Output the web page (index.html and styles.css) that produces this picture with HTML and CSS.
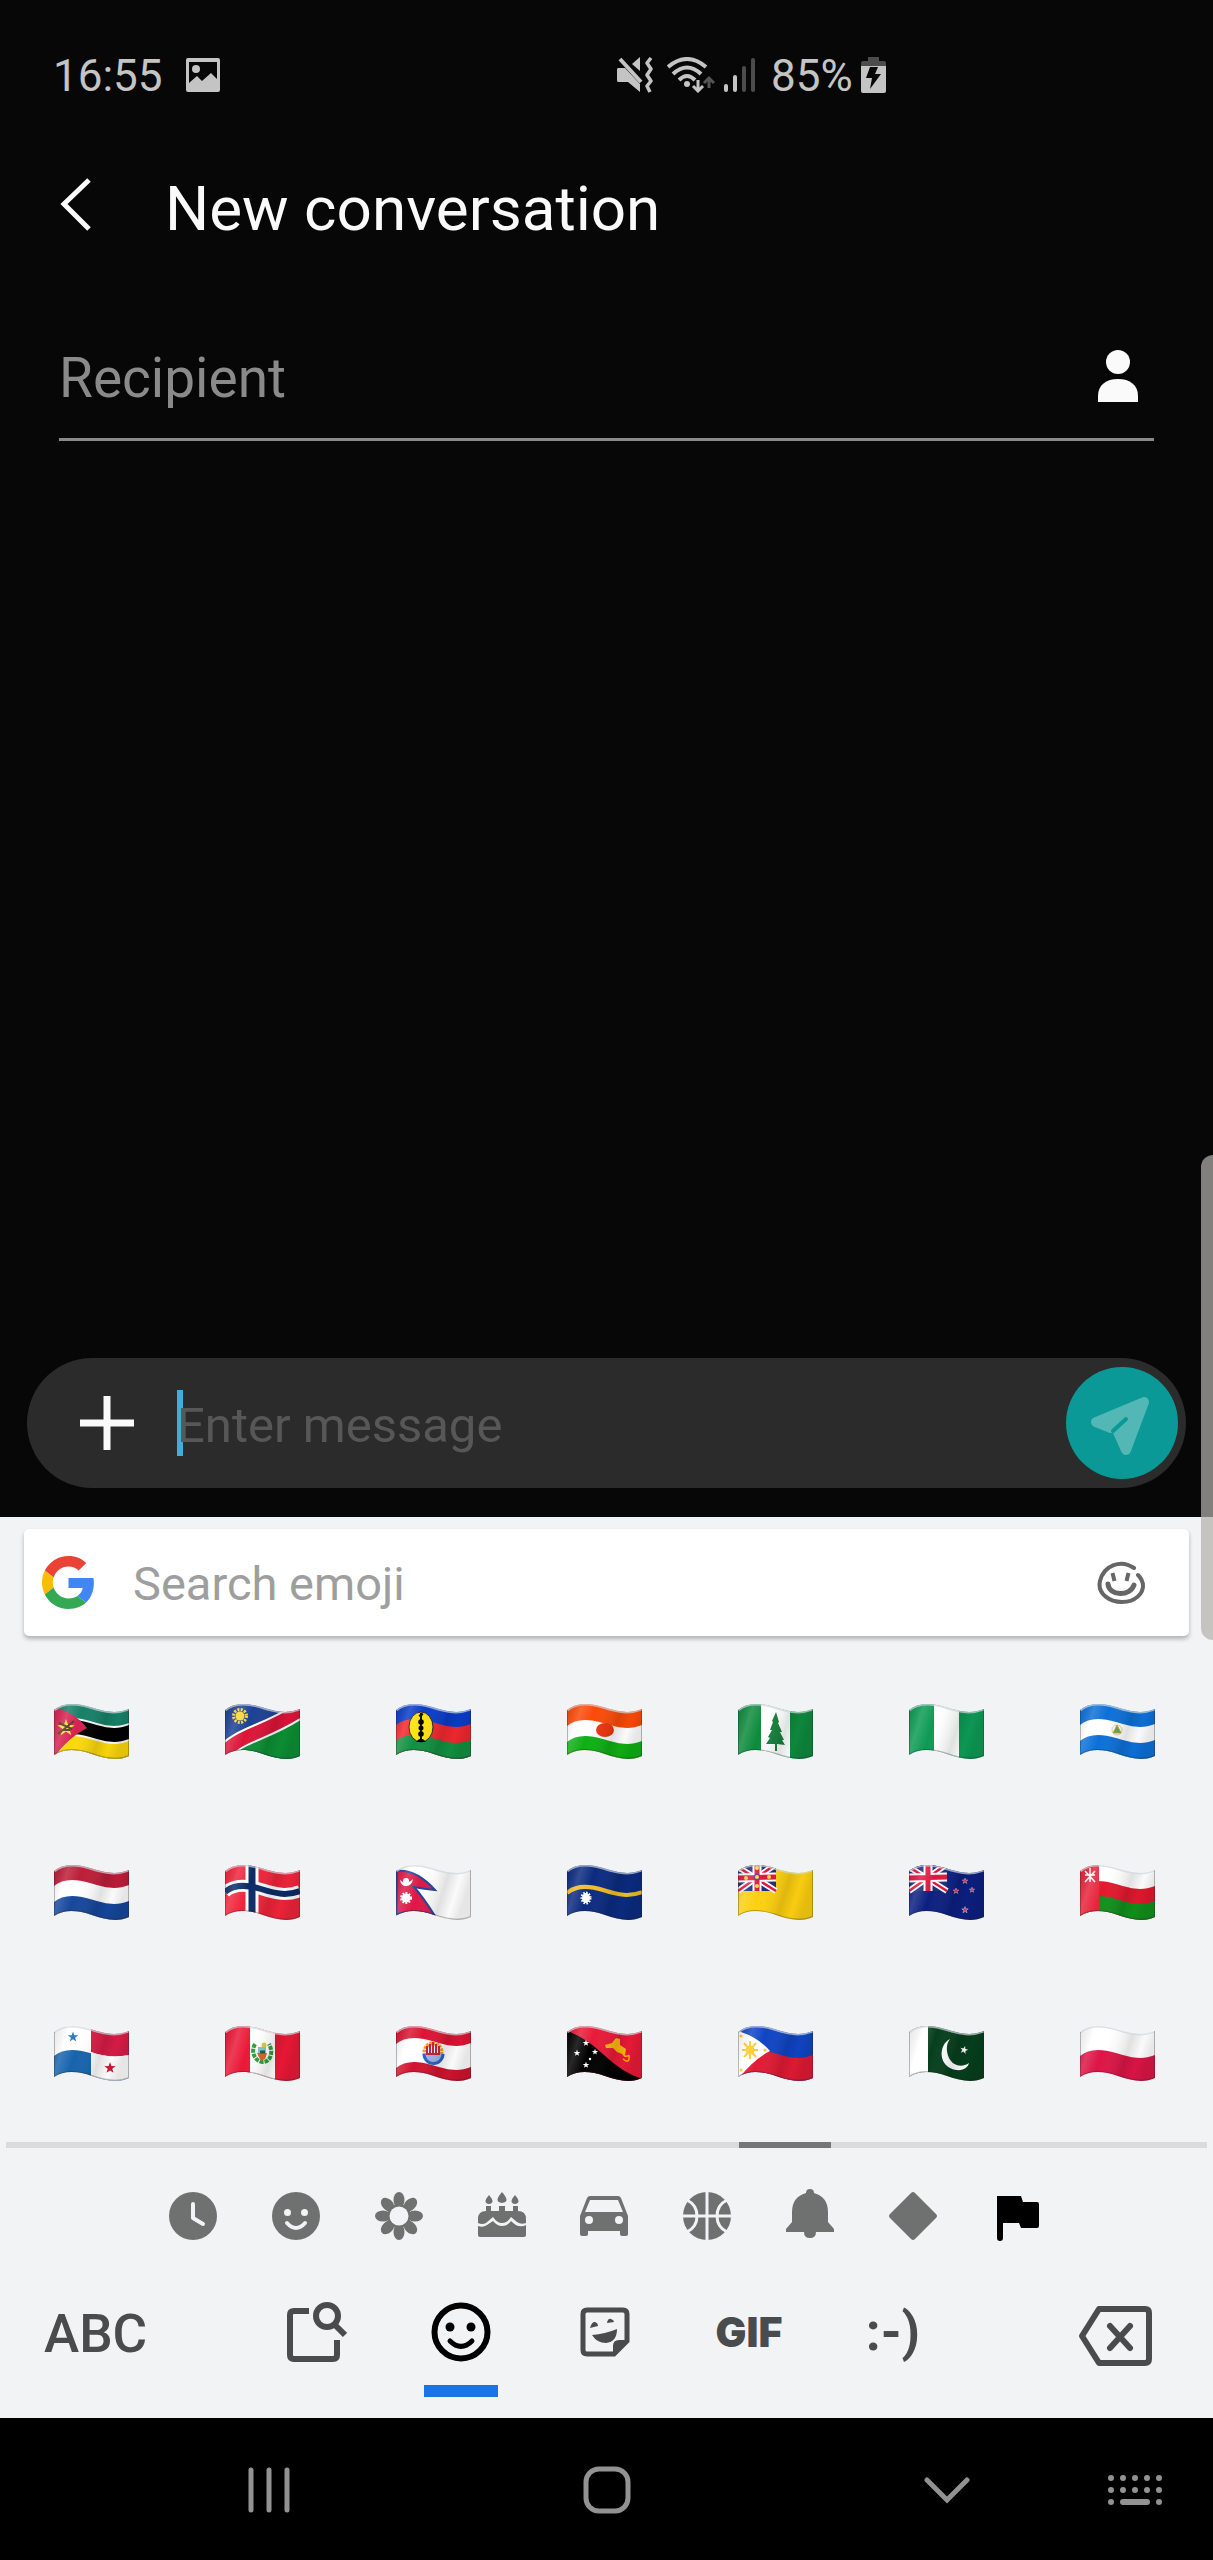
FILE: index.html
```html
<!DOCTYPE html>
<html lang="en">
<head>
<meta charset="utf-8">
<meta name="viewport" content="width=device-width, initial-scale=1">
<title>New conversation</title>
<link rel="stylesheet" href="styles.css">
</head>
<body>
<svg class="defs" width="0" height="0" aria-hidden="true">
  <defs>
    <clipPath id="cloth"><path d="M0 7C8 0 20 -1 36 4S62 11 75 6V53C64 58 52 56 38 51S10 45 0 52Z"/></clipPath>
    <path id="band" d="M0 7C8 0 20 -1 36 4S62 11 75 6V60H0Z"/>
    <path id="curve" d="M0 7C8 0 20 -1 36 4S62 11 75 6" fill="none"/>
    <path id="star" d="M0-10 2.4-3.2 9.5-3.1 3.8 1.2 5.9 8.1 0 4-5.9 8.1-3.8 1.2-9.5-3.1-2.4-3.2Z"/>
    <linearGradient id="folds" x1="0" y1="0" x2="1" y2=".25">
      <stop offset="0" stop-color="#000" stop-opacity=".08"/>
      <stop offset=".2" stop-color="#fff" stop-opacity=".16"/>
      <stop offset=".38" stop-color="#fff" stop-opacity="0"/>
      <stop offset=".7" stop-color="#000" stop-opacity=".12"/>
      <stop offset=".86" stop-color="#000" stop-opacity=".02"/>
      <stop offset="1" stop-color="#000" stop-opacity=".1"/>
    </linearGradient>
    <g id="shade">
      <rect width="75" height="60" fill="url(#folds)"/>
      <path d="M0 7C8 0 20 -1 36 4S62 11 75 6" fill="none" stroke="#cfd6dc" stroke-opacity=".7" stroke-width="3"/>
      <path d="M75 6V53C64 58 52 56 38 51S10 45 0 52V7" fill="none" stroke="#222" stroke-opacity=".3" stroke-width="2"/>
    </g>
    <g id="union">
      <path fill="#1c2a7c" d="M0 0H38V27H0Z"/>
      <path stroke="#fff" stroke-width="6" d="M0 3 38 27M38 0 0 27"/>
      <path stroke="#e0143c" stroke-width="2.5" d="M0 3 38 27M38 0 0 27"/>
      <path stroke="#fff" stroke-width="9" d="M19 0V27M0 14 38 13"/>
      <path stroke="#e0143c" stroke-width="5" d="M19 0V27M0 14 38 13"/>
    </g>
  </defs>
</svg>

<div class="conversation">
  <div class="status">
    <div class="status-left">
      <span>16:55</span>
      <svg width="36" height="34" viewBox="0 0 36 34"><path fill="#c4c4c4" fill-rule="evenodd" d="M3 0H33Q35 0 35 2V32Q35 34 33 34H3Q1 34 1 32V2Q1 0 3 0ZM4 4V25L12 18 17 23 26 15 32 21V4Z"/><circle cx="11" cy="11" r="4" fill="#c4c4c4"/></svg>
    </div>
    <div class="status-right">
      <svg width="36" height="36" viewBox="0 0 36 36" fill="#c4c4c4"><path d="M1 11H8L23 27V35L11 25H1Q0 25 0 23V13Q0 11 1 11ZM23 0V14L15 7Z"/><path d="M3 2 24 25" stroke="#c4c4c4" stroke-width="4"/><path d="M34 1 30 6 34 12 30 18 34 24 30 29 33 35" fill="none" stroke="#c4c4c4" stroke-width="3.5" stroke-linejoin="round"/></svg>
      <svg class="wifi" width="48" height="36" viewBox="0 0 48 36" fill="none" stroke="#c4c4c4" stroke-width="4"><path d="M1 10Q20-6 39 10M6 17Q20 4 34 17M12 23Q20 15 28 23"/><circle cx="20" cy="27" r="3" fill="#c4c4c4" stroke="none"/><path d="M31 23V33M26 29 31 34 36 29" stroke-width="3"/><path d="M42 31V22M37 26 42 21 47 26" stroke="#555" stroke-width="3"/></svg>
      <svg class="signal" width="32" height="34" viewBox="0 0 32 34" stroke-width="4" stroke-linecap="round"><path stroke="#c4c4c4" d="M2 28V32M11 19V32"/><path stroke="#4c4c4c" d="M20 10V32M29 2V32"/></svg>
      <span>85%</span>
      <svg class="battery" width="25" height="36" viewBox="0 0 25 36"><path fill="#4c4c4c" d="M7 0H18V4H23Q25 4 25 6V10H0V6Q0 4 2 4H7Z"/><path fill="#c4c4c4" d="M0 9H25V34Q25 36 23 36H2Q0 36 0 34Z"/><path fill="#080808" d="M9 10H17L14 17H20L9 32 11 21H5Z"/></svg>
    </div>
  </div>

  <header class="appbar">
    <button class="icon-button" aria-label="Back"><svg width="36" height="60" viewBox="0 0 36 60"><path d="M32 2 7 26 32 51" fill="none" stroke="#fafafa" stroke-width="5"/></svg></button>
    <h1>New conversation</h1>
  </header>

  <div class="recipient">
    <input type="text" aria-label="Recipient" placeholder="Recipient">
    <button class="icon-button" aria-label="Choose contact"><svg width="40" height="56" viewBox="0 0 40 56" fill="#fafafa"><circle cx="20" cy="12" r="12"/><path d="M0 52V46C0 35 8 29 20 29S40 35 40 46V52Z"/></svg></button>
  </div>

  <main class="thread"></main>

  <div class="compose">
    <button class="icon-button" aria-label="Add attachment"><svg width="54" height="54" viewBox="0 0 54 54"><path d="M27 0V54M0 27H54" stroke="#fafafa" stroke-width="7"/></svg></button>
    <div class="field"><span class="caret"></span><input type="text" aria-label="Message" placeholder="Enter message"></div>
    <button class="send" aria-label="Send"><svg width="112" height="112" viewBox="0 0 112 112"><path d="M78 35 30 55 45 61 60 47 52 65 60 83Z" fill="#53b7b6" stroke="#53b7b6" stroke-width="10" stroke-linejoin="round"/><path d="M47 64 60 52" stroke="#0a9997" stroke-width="4" stroke-linecap="round"/></svg></button>
  </div>
</div>

<section class="keyboard" aria-label="Emoji keyboard">
  <div class="search">
    <svg width="53" height="53" viewBox="0 0 48 48"><path fill="#ea4335" d="M24 9.5c3.54 0 6.71 1.22 9.21 3.6l6.85-6.85C35.9 2.38 30.47 0 24 0 14.62 0 6.51 5.38 2.56 13.22l7.98 6.19C12.43 13.72 17.74 9.5 24 9.5z"/><path fill="#4285f4" d="M46.98 24.55c0-1.57-.15-3.09-.38-4.55H24v9.02h12.94c-.58 2.96-2.26 5.48-4.78 7.18l7.73 6c4.51-4.18 7.09-10.36 7.09-17.65z"/><path fill="#fbbc05" d="M10.53 28.59c-.48-1.45-.76-2.99-.76-4.59s.27-3.14.76-4.59l-7.98-6.19C.92 16.46 0 20.12 0 24c0 3.88.92 7.54 2.56 10.78l7.97-6.19z"/><path fill="#34a853" d="M24 48c6.48 0 11.93-2.13 15.89-5.81l-7.73-6c-2.15 1.45-4.92 2.3-8.16 2.3-6.26 0-11.57-4.22-13.47-9.91l-7.98 6.19C6.51 42.62 14.62 48 24 48z"/></svg>
    <input type="search" aria-label="Search emoji" placeholder="Search emoji">
    <button class="icon-button" aria-label="Draw emoji"><svg width="48" height="44" viewBox="0 0 48 44" fill="none" stroke="#666" stroke-width="4" stroke-linecap="round"><path d="M37 7C24-2 7 4 3 20 0 33 13 41 25 41 39 41 46 32 46 25Q46 19 41 14"/><path d="M11 23C12 35 33 36 37 24" stroke-width="5"/><path d="M16 14 17 18M31 14 30 18" stroke-width="4" stroke-linecap="square"/></svg></button>
  </div>

  <div class="flags">
    <button aria-label="Mozambique"><svg viewBox="0 0 75 56"><g clip-path="url(#cloth)"><use href="#band" fill="#178067" y="-2"/><use href="#band" fill="#fff" y="14"/><use href="#band" fill="#000" y="16"/><use href="#band" fill="#fff" y="30"/><use href="#band" fill="#fbd80b" y="32"/><path fill="#d62150" d="M0 4Q22 10 33 25 15 34 0 54Z"/><use href="#star" fill="#fbdc3c" transform="translate(12 25) scale(.9)"/><path d="M4 31 20 18M5 20 18 26M9 27H16" stroke="#4a3918" stroke-width="2"/><use href="#shade"/></g></svg></button>
    <button aria-label="Namibia"><svg viewBox="0 0 75 56"><g clip-path="url(#cloth)"><path fill="#1c4094" d="M0 0H75V56H0Z"/><path fill="#0d8f34" d="M0 56C20 34 40 32 75 8V60H0Z"/><path d="M-4 53C14 30 42 31 80 4" fill="none" stroke="#fff" stroke-width="17"/><path d="M-4 53C14 30 42 31 80 4" fill="none" stroke="#dc1438" stroke-width="13"/><circle cx="15" cy="13" r="6.5" fill="none" stroke="#ffd62e" stroke-width="3" stroke-dasharray="2 1.4"/><circle cx="15" cy="13" r="4.5" fill="#ffd62e"/><use href="#shade"/></g></svg></button>
    <button aria-label="New Caledonia"><svg viewBox="0 0 75 56"><g clip-path="url(#cloth)"><use href="#band" fill="#0a3cc8" y="-2"/><use href="#band" fill="#f02830" y="15"/><use href="#band" fill="#129040" y="31"/><ellipse cx="25" cy="24" rx="12" ry="15" fill="#fce210" stroke="#222" stroke-width="1"/><path d="M25 10V36" stroke="#111" stroke-width="2"/><path d="M20 39Q25 32 30 39Z"/><circle cx="25" cy="19" r="2.8"/><circle cx="25" cy="25" r="2.5"/><circle cx="25" cy="31" r="2.8"/><path d="M23 13 27 11" stroke="#111" stroke-width="2"/><use href="#shade"/></g></svg></button>
    <button aria-label="Niger"><svg viewBox="0 0 75 56"><g clip-path="url(#cloth)"><use href="#band" fill="#fa4a08" y="-2"/><use href="#band" fill="#fff" y="16"/><use href="#band" fill="#0eaf14" y="32"/><ellipse cx="38" cy="27" rx="9" ry="7" fill="#ec330d"/><use href="#shade"/></g></svg></button>
    <button aria-label="Norfolk Island"><svg viewBox="0 0 75 56"><g clip-path="url(#cloth)"><path fill="#0d8a3c" d="M0 0H75V56H0Z"/><path fill="#fff" d="M23 0H52V56H23Z"/><path fill="#14803c" d="M38 9 41 19 40 20 44 29 42 29 46 37 44 37 47 42 39 41V48H37V41L28 41 32 35 30 34 34 27 32 27 35 19 34 18Z"/><use href="#shade"/></g></svg></button>
    <button aria-label="Nigeria"><svg viewBox="0 0 75 56"><g clip-path="url(#cloth)"><path fill="#0c9a54" d="M0 0H75V56H0Z"/><path fill="#fff" d="M25 0H50V56H25Z"/><use href="#shade"/></g></svg></button>
    <button aria-label="Nicaragua"><svg viewBox="0 0 75 56"><g clip-path="url(#cloth)"><use href="#band" fill="#0c70d8" y="-2"/><use href="#band" fill="#fff" y="15"/><use href="#band" fill="#0c70d8" y="31"/><circle cx="37" cy="27" r="5" fill="none" stroke="#ddd09c"/><path d="M37 22 41 30H33Z" fill="#5da35a" stroke="#c9a32a"/><use href="#shade"/></g></svg></button>

    <button aria-label="Netherlands"><svg viewBox="0 0 75 56"><g clip-path="url(#cloth)"><use href="#band" fill="#bd1d38" y="-2"/><use href="#band" fill="#fff" y="15"/><use href="#band" fill="#15479c" y="31"/><use href="#shade"/></g></svg></button>
    <button aria-label="Norway"><svg viewBox="0 0 75 56"><g clip-path="url(#cloth)"><path fill="#f0243a" d="M0 0H75V56H0Z"/><use href="#curve" y="21" stroke="#fff" stroke-width="12"/><path stroke="#fff" stroke-width="13" d="M27 0V56"/><use href="#curve" y="21" stroke="#0b2a66" stroke-width="6"/><path stroke="#0b2a66" stroke-width="7" d="M27 0V56"/><use href="#shade"/></g></svg></button>
    <button aria-label="Nepal"><svg viewBox="0 0 75 56"><g clip-path="url(#cloth)"><path fill="#fff" d="M0 0H75V56H0Z"/><path fill="#dc1846" stroke="#24419a" stroke-width="2" d="M1 7Q20 5 39 26 28 25 18 23 27 33 39 52 22 44 1 50Z"/><path d="M4 16Q10 22 17 15 16 22 10 22 5 22 4 16Z" fill="#fff"/><circle cx="10" cy="17" r="3" fill="#fff"/><circle cx="10" cy="34" r="4.5" fill="#fff" stroke="#fff" stroke-width="3" stroke-dasharray="1.6 1.3"/><use href="#shade"/></g></svg></button>
    <button aria-label="Nauru"><svg viewBox="0 0 75 56"><g clip-path="url(#cloth)"><path fill="#0b2b80" d="M0 0H75V56H0Z"/><use href="#curve" y="22" stroke="#f3bc28" stroke-width="4"/><ellipse cx="19" cy="34" rx="4" ry="5" fill="#fff" stroke="#fff" stroke-width="3" stroke-dasharray="1.4 1.2"/><use href="#shade"/></g></svg></button>
    <button aria-label="Niue"><svg viewBox="0 0 75 56"><g clip-path="url(#cloth)"><path fill="#fdd010" d="M0 0H75V56H0Z"/><use href="#union"/><circle cx="19" cy="13" r="3" fill="#36409a"/><g fill="#fdd84a"><circle cx="19" cy="4" r="2"/><circle cx="19" cy="13" r="2"/><circle cx="19" cy="22" r="2"/><circle cx="8" cy="14" r="2"/><circle cx="31" cy="13" r="2"/></g><use href="#shade"/></g></svg></button>
    <button aria-label="New Zealand"><svg viewBox="0 0 75 56"><g clip-path="url(#cloth)"><path fill="#0b1f80" d="M0 0H75V56H0Z"/><use href="#union"/><g fill="#e0335a" stroke="#d9a8c4" stroke-width="2"><use href="#star" transform="translate(56 17) scale(.3)"/><use href="#star" transform="translate(47 27) scale(.3)"/><use href="#star" transform="translate(63 26) scale(.28)"/><use href="#star" transform="translate(56 46) scale(.34)"/></g><use href="#shade"/></g></svg></button>
    <button aria-label="Oman"><svg viewBox="0 0 75 56"><g clip-path="url(#cloth)"><use href="#band" fill="#fff" y="-2"/><use href="#band" fill="#e3182e" y="16"/><use href="#band" fill="#11901c" y="31"/><path fill="#e6233a" d="M0 0H19V56H0Z"/><path d="M5 7 15 18M15 7 5 18M10 4V18M5 11H15" stroke="#fff" stroke-width="1.5"/><use href="#shade"/></g></svg></button>

    <button aria-label="Panama"><svg viewBox="0 0 75 56"><g clip-path="url(#cloth)"><use href="#band" fill="#fff" y="-2"/><use href="#band" fill="#1663ad" y="24"/><path fill="#d81c46" d="M37 0H75V30Q56 34 37 27Z"/><path fill="#fff" d="M37 27Q56 34 75 30V60H37Z"/><use href="#star" fill="#1a6fba" transform="translate(19 12) scale(.55)"/><use href="#star" fill="#cc1c34" transform="translate(56 43) scale(.6)"/><use href="#shade"/></g></svg></button>
    <button aria-label="Peru"><svg viewBox="0 0 75 56"><g clip-path="url(#cloth)"><path fill="#ea1836" d="M0 0H75V56H0Z"/><path fill="#fff" d="M25 0H50V56H25Z"/><path d="M30 19C25 28 31 37 38 37S49 28 44 19" fill="none" stroke="#2f9d3c" stroke-width="4" stroke-dasharray="4 1"/><path d="M33 22H41V32L37 35 33 31Z" fill="#7bc4ce"/><path d="M32 28H42L40 34 36 36Z" fill="#d96522"/><circle cx="39" cy="20" r="2.5" fill="#e0c63c"/><path d="M35 27H40" stroke="#2a5a2e" stroke-width="3"/><use href="#shade"/></g></svg></button>
    <button aria-label="French Polynesia"><svg viewBox="0 0 75 56"><g clip-path="url(#cloth)"><use href="#band" fill="#dc1433" y="-2"/><use href="#band" fill="#fff" y="12"/><use href="#band" fill="#d0142e" y="36"/><circle cx="37" cy="27" r="8.5" fill="#fff" stroke="#f09a28" stroke-width="4" stroke-dasharray="2.5 .8"/><path d="M28 29A9 9 0 0 0 47 29" fill="#9bb4e8" stroke="#2b62c4" stroke-width="3"/><path d="M31 30V21M34 30V19M37 29V17M40 30V19M43 30V21M31 29H43" stroke="#c41f38" stroke-width="2"/><use href="#shade"/></g></svg></button>
    <button aria-label="Papua New Guinea"><svg viewBox="0 0 75 56"><g clip-path="url(#cloth)"><path fill="#e81a38" d="M0 0H75V56H0Z"/><path d="M0 6Q18 12 37 30T75 54V60H0Z"/><g fill="#fff"><use href="#star" transform="translate(19 18) scale(.35)"/><use href="#star" transform="translate(10 28) scale(.35)"/><use href="#star" transform="translate(28 27) scale(.32)"/><use href="#star" transform="translate(19 40) scale(.35)"/><circle cx="23" cy="34" r="1.2"/></g><path fill="#f8b60c" d="M38 20 45 18 49 13 53 14 53 20 59 24 58 30 50 27 46 23 39 23Z"/><path d="M55 26Q57 34 62 30M56 34Q63 40 62 30" stroke="#f8b60c" stroke-width="1.5" fill="none"/><use href="#shade"/></g></svg></button>
    <button aria-label="Philippines"><svg viewBox="0 0 75 56"><g clip-path="url(#cloth)"><use href="#band" fill="#1044c4" y="-2"/><use href="#band" fill="#e01a34" y="24"/><path fill="#fff" d="M0 6Q20 12 32 26 16 34 0 54Z"/><g fill="#fbc928"><circle cx="12" cy="25" r="4.5"/><circle cx="27" cy="25" r="1.6"/><circle cx="3" cy="11" r="1.6"/><circle cx="3" cy="45" r="1.6"/></g><path d="M12 16V34M4 25H20M6 18 18 32M18 18 6 32" stroke="#fbc928" stroke-width="2"/><use href="#shade"/></g></svg></button>
    <button aria-label="Pakistan"><svg viewBox="0 0 75 56"><g clip-path="url(#cloth)"><path fill="#063f1c" d="M0 0H75V56H0Z"/><path fill="#fff" d="M0 0H19V56H0Z"/><path fill="#fff" d="M41 14C29 20 29 42 47 45 55 46 59 42 60 38 53 43 44 41 40 33 37 26 37 19 41 14Z"/><use href="#star" fill="#fff" transform="translate(55 25) rotate(15) scale(.42)"/><use href="#shade"/></g></svg></button>
    <button aria-label="Poland"><svg viewBox="0 0 75 56"><g clip-path="url(#cloth)"><use href="#band" fill="#fff" y="-2"/><use href="#band" fill="#dc1546" y="24"/><use href="#shade"/></g></svg></button>
  </div>

  <div class="track"><div class="thumb"></div></div>

  <div class="categories">
    <button aria-label="Recent"><svg viewBox="0 0 48 48"><circle cx="24" cy="24" r="24"/><path d="M24 12V26L34 32" fill="none" stroke="#f1f3f5" stroke-width="4" stroke-linecap="round" stroke-linejoin="round"/></svg></button>
    <button aria-label="Smileys"><svg viewBox="0 0 48 48"><circle cx="24" cy="24" r="24"/><g fill="#f1f3f5"><circle cx="15.5" cy="20.5" r="3.5"/><circle cx="32.5" cy="20.5" r="3.5"/></g><path d="M15 31Q24 41 33 31" fill="none" stroke="#f1f3f5" stroke-width="4" stroke-linecap="round"/></svg></button>
    <button aria-label="Nature"><svg viewBox="0 0 48 48"><g id="petals"><ellipse cx="24" cy="8" rx="5.5" ry="8"/><ellipse cx="24" cy="40" rx="5.5" ry="8"/><ellipse cx="8" cy="24" rx="8" ry="5.5"/><ellipse cx="40" cy="24" rx="8" ry="5.5"/></g><use href="#petals" transform="rotate(45 24 24)"/><circle cx="24" cy="24" r="12"/><circle cx="24" cy="24" r="9.5" fill="#f1f3f5"/></svg></button>
    <button aria-label="Food"><svg viewBox="0 0 48 48"><path d="M0 34Q5 36 9 33L15 29Q19 34 24 34T33 29Q38 34 41 34 45 35 48 33V43Q48 45 46 45H2Q0 45 0 43ZM0 31V27Q0 19 8 19H8V14H13V19H21V14H27V19H35V14H40V19Q48 19 48 27V31Q43 33 39 30L33 25Q29 31 24 31T15 25L8 31Q4 33 0 31ZM11 3Q18 11 11 12 4 11 11 3ZM24 0Q33 10 24 11 15 10 24 0ZM37 3Q44 11 37 12 30 11 37 3Z"/></svg></button>
    <button aria-label="Travel"><svg viewBox="0 0 48 48"><path fill-rule="evenodd" d="M10 4H38Q40 4 41 6L48 24V42Q48 44 46 44H42Q40 44 40 42V39H8V42Q8 44 6 44H2Q0 44 0 42V24L7 6Q8 4 10 4ZM10 8 5 20H43L38 8Z"/><circle cx="9" cy="28" r="4" fill="#f1f3f5"/><circle cx="39" cy="28" r="4" fill="#f1f3f5"/></svg></button>
    <button aria-label="Activities"><svg viewBox="0 0 48 48"><circle cx="24" cy="24" r="24"/><path d="M24 0V48M0 24H48M4 8Q14 13 14 24T4 40M44 8Q34 13 34 24T44 40" fill="none" stroke="#f1f3f5" stroke-width="3"/></svg></button>
    <button aria-label="Objects"><svg viewBox="0 0 48 48"><path d="M24-3Q28-3 28 1 42 5 42 20V30L48 37V40H30Q30 46 24 46T18 40H0V37L6 30V20Q6 5 20 1 20-3 24-3Z"/></svg></button>
    <button aria-label="Symbols"><svg viewBox="0 0 48 48"><path d="M22 1Q24-1 26 1L47 22Q49 24 47 26L26 47Q24 49 22 47L1 26Q-1 24 1 22Z"/></svg></button>
    <button class="current" aria-label="Flags"><svg viewBox="0 0 48 48"><path d="M5 4H29L31 10H45Q47 10 47 12V34Q47 36 45 36H29L27 31H11V46Q11 49 8 49T5 46Z"/></svg></button>
  </div>

  <div class="modes">
    <button class="abc">ABC</button>
    <button aria-label="Sticker search"><svg width="60" height="60" viewBox="0 0 60 60" fill="none" stroke="#4a4b4d" stroke-width="6"><path d="M22 9H7Q3 9 3 13V53Q3 57 7 57H46Q50 57 50 53V38"/><circle cx="40" cy="14" r="11"/><path d="M47 22 58 33"/></svg></button>
    <button class="active" aria-label="Emoji"><svg width="60" height="60" viewBox="0 0 60 60"><circle cx="30" cy="30" r="26.5" fill="none" stroke="#000" stroke-width="6"/><circle cx="19" cy="25" r="4.5"/><circle cx="40" cy="25" r="4.5"/><path d="M19 39Q30 50 41 39" fill="none" stroke="#000" stroke-width="5" stroke-linecap="round"/></svg></button>
    <button aria-label="Stickers"><svg width="50" height="50" viewBox="0 0 50 50"><path d="M7 3H43Q47 3 47 7V34L34 47H7Q3 47 3 43V7Q3 3 7 3Z" fill="none" stroke="#4a4b4d" stroke-width="5"/><path d="M33 48V39Q33 33 39 33H48ZM12 28Q25 27 37 22 37 35 26 36 17 36 12 28ZM10 21Q12 14 15 15 18 16 18 19ZM27 16Q28 11 31 12 34 13 34 15Z" fill="#4a4b4d"/></svg></button>
    <button class="gif">GIF</button>
    <button class="emoticon">:-)</button>
    <button class="backspace" aria-label="Backspace"><svg width="75" height="60" viewBox="0 0 75 60" fill="none" stroke="#4a4b4d" stroke-width="6" stroke-linejoin="round"><path d="M21 3H67Q71 3 71 7V53Q71 57 67 57H21L4 30Z"/><path d="M32 20 52 42M52 20 32 42" stroke-linecap="round"/></svg></button>
  </div>
</section>

<nav class="navbar">
  <div class="system">
    <button aria-label="Recents"><svg width="42" height="48" viewBox="0 0 42 48"><path d="M3 4V44M21 4V44M39 4V44" stroke="#929292" stroke-width="5" stroke-linecap="round"/></svg></button>
    <button aria-label="Home"><svg width="48" height="48" viewBox="0 0 48 48"><rect x="3" y="3" width="42" height="42" rx="13" fill="none" stroke="#929292" stroke-width="5"/></svg></button>
    <button aria-label="Hide keyboard"><svg width="46" height="48" viewBox="0 0 46 48"><path d="M3 14 23 34 43 14" fill="none" stroke="#929292" stroke-width="5" stroke-linecap="round"/></svg></button>
  </div>
  <button aria-label="Switch keyboard"><svg width="55" height="48" viewBox="0 0 55 48" stroke="#929292" stroke-width="6" stroke-linecap="round"><path d="M3 12H3M15 12H15M27 12H27M39 12H39M51 12H51M3 24H3M15 24H15M27 24H27M39 24H39M51 24H51M3 36H3M15 36H39M51 36H51"/></svg></button>
</nav>

<div class="edge-handle"></div>
</body>
</html>
```
FILE: styles.css
```css
* {
  box-sizing: border-box;
}

body {
  margin: 0;
  min-height: 100vh;
  display: flex;
  flex-direction: column;
  position: relative;
  overflow-x: hidden;
  background: #000;
  font-family: Roboto, sans-serif;
}

svg {
  display: block;
  flex: none;
}

.defs {
  position: absolute;
}

button {
  display: flex;
  align-items: center;
  justify-content: center;
  padding: 0;
  border: 0;
  background: none;
  font: inherit;
  color: inherit;
  cursor: pointer;
}

input {
  flex: 1;
  min-width: 0;
  width: 100%;
  padding: 0;
  border: 0;
  outline: 0;
  background: none;
  font: inherit;
  color: inherit;
  appearance: none;
}

input::placeholder {
  color: inherit;
  opacity: 1;
}

.conversation {
  flex: 1;
  display: flex;
  flex-direction: column;
  background: #070707;
}

/* Status bar */
.status {
  display: grid;
  grid-template-columns: 617px 1fr;
  align-items: center;
  height: 48px;
  margin-top: 50px;
  font-size: 44px;
  line-height: 48px;
  color: #c4c4c4;
}

.status-left,
.status-right {
  display: flex;
  align-items: center;
}

.status-left {
  gap: 22px;
  padding-left: 53px;
}

.status span {
  padding-top: 2px;
}

.wifi {
  margin-left: 14px;
}

.signal {
  margin: 0 15px 0 9px;
}

.battery {
  margin-left: 8px;
}

/* Title and recipient */
.appbar {
  display: flex;
  align-items: center;
  gap: 72px;
  height: 100px;
  margin-top: 60px;
  padding-left: 57px;
  color: #fafafa;
}

.appbar h1 {
  margin: 0;
  font-size: 62px;
  font-weight: 400;
}

.recipient {
  display: flex;
  align-items: center;
  height: 123px;
  margin: 60px 59px 0;
  padding-right: 16px;
  border-bottom: 3px solid #8a8a8a;
  font-size: 55px;
  color: #8a8a8a;
}

.thread {
  flex: 1;
}

/* Message box */
.compose {
  display: flex;
  align-items: center;
  height: 130px;
  margin: 0 27px 29px;
  padding: 0 8px 0 53px;
  border-radius: 65px;
  background: #2b2b2b;
  font-size: 49px;
  color: #575757;
}

.field {
  flex: 1;
  display: flex;
  align-items: center;
  position: relative;
  height: 66px;
  margin-left: 43px;
}

.field input {
  position: relative;
  padding-top: 4px;
}

.caret {
  position: absolute;
  left: 0;
  top: 0;
  width: 6px;
  height: 66px;
  background: #42acda;
}

.send {
  width: 112px;
  height: 112px;
  border-radius: 50%;
  background: #0a9997;
}

/* Keyboard */
.keyboard {
  padding-top: 12px;
  background: #f1f3f5;
}

.search {
  display: flex;
  align-items: center;
  gap: 38px;
  height: 107px;
  margin: 0 24px;
  padding: 0 44px 0 18px;
  border-radius: 5px;
  background: #fff;
  box-shadow: 0 3px 4px #0004;
  font-size: 47px;
  color: #9e9e9e;
}

.search input {
  padding-top: 2px;
}

.flags {
  display: grid;
  grid-template-columns: repeat(7, 1fr);
  grid-auto-rows: 161px;
  margin-top: 14px;
  padding: 0 10px 0 6px;
}

.flags svg {
  width: 75px;
  height: 56px;
}

.track {
  height: 6px;
  margin: 9px 6px 0;
  background: #dadbdd;
}

.thumb {
  width: 92px;
  height: 6px;
  margin-left: 61%;
  background: #757677;
}

.categories {
  display: grid;
  grid-template-columns: repeat(9, 1fr);
  height: 136px;
  padding: 0 146px 0 142px;
}

.categories svg {
  width: 48px;
  height: 48px;
  overflow: visible;
  fill: #6f7170;
}

.categories .current svg {
  fill: #000;
}

.modes {
  display: grid;
  grid-template-columns: 245px repeat(5, 1fr) 248px;
  height: 134px;
  padding-bottom: 38px;
  font-size: 53px;
  font-weight: 500;
  color: #4a4b4d;
}

.modes .abc {
  justify-content: flex-start;
  padding: 4px 0 0 44px;
}

.modes .active {
  position: relative;
}

.modes .active::after {
  content: "";
  position: absolute;
  left: 50%;
  bottom: -17px;
  width: 74px;
  height: 12px;
  margin-left: -37px;
  background: #1a73e8;
}

.modes .gif {
  font-family: Inter, sans-serif;
  font-size: 41px;
  font-weight: 900;
}

.modes .emoticon {
  font-weight: 700;
}

.modes .backspace {
  justify-content: flex-end;
  padding: 8px 60px 0 0;
}

/* System navigation */
.navbar {
  display: flex;
  align-items: center;
  gap: 138px;
  height: 142px;
  padding: 2px 50px 0 248px;
}

.system {
  flex: 1;
  display: flex;
  justify-content: space-between;
}

.edge-handle {
  position: absolute;
  right: -12px;
  bottom: 920px;
  width: 24px;
  height: 485px;
  border-radius: 14px;
  background: #b4b0abb6;
}
```
